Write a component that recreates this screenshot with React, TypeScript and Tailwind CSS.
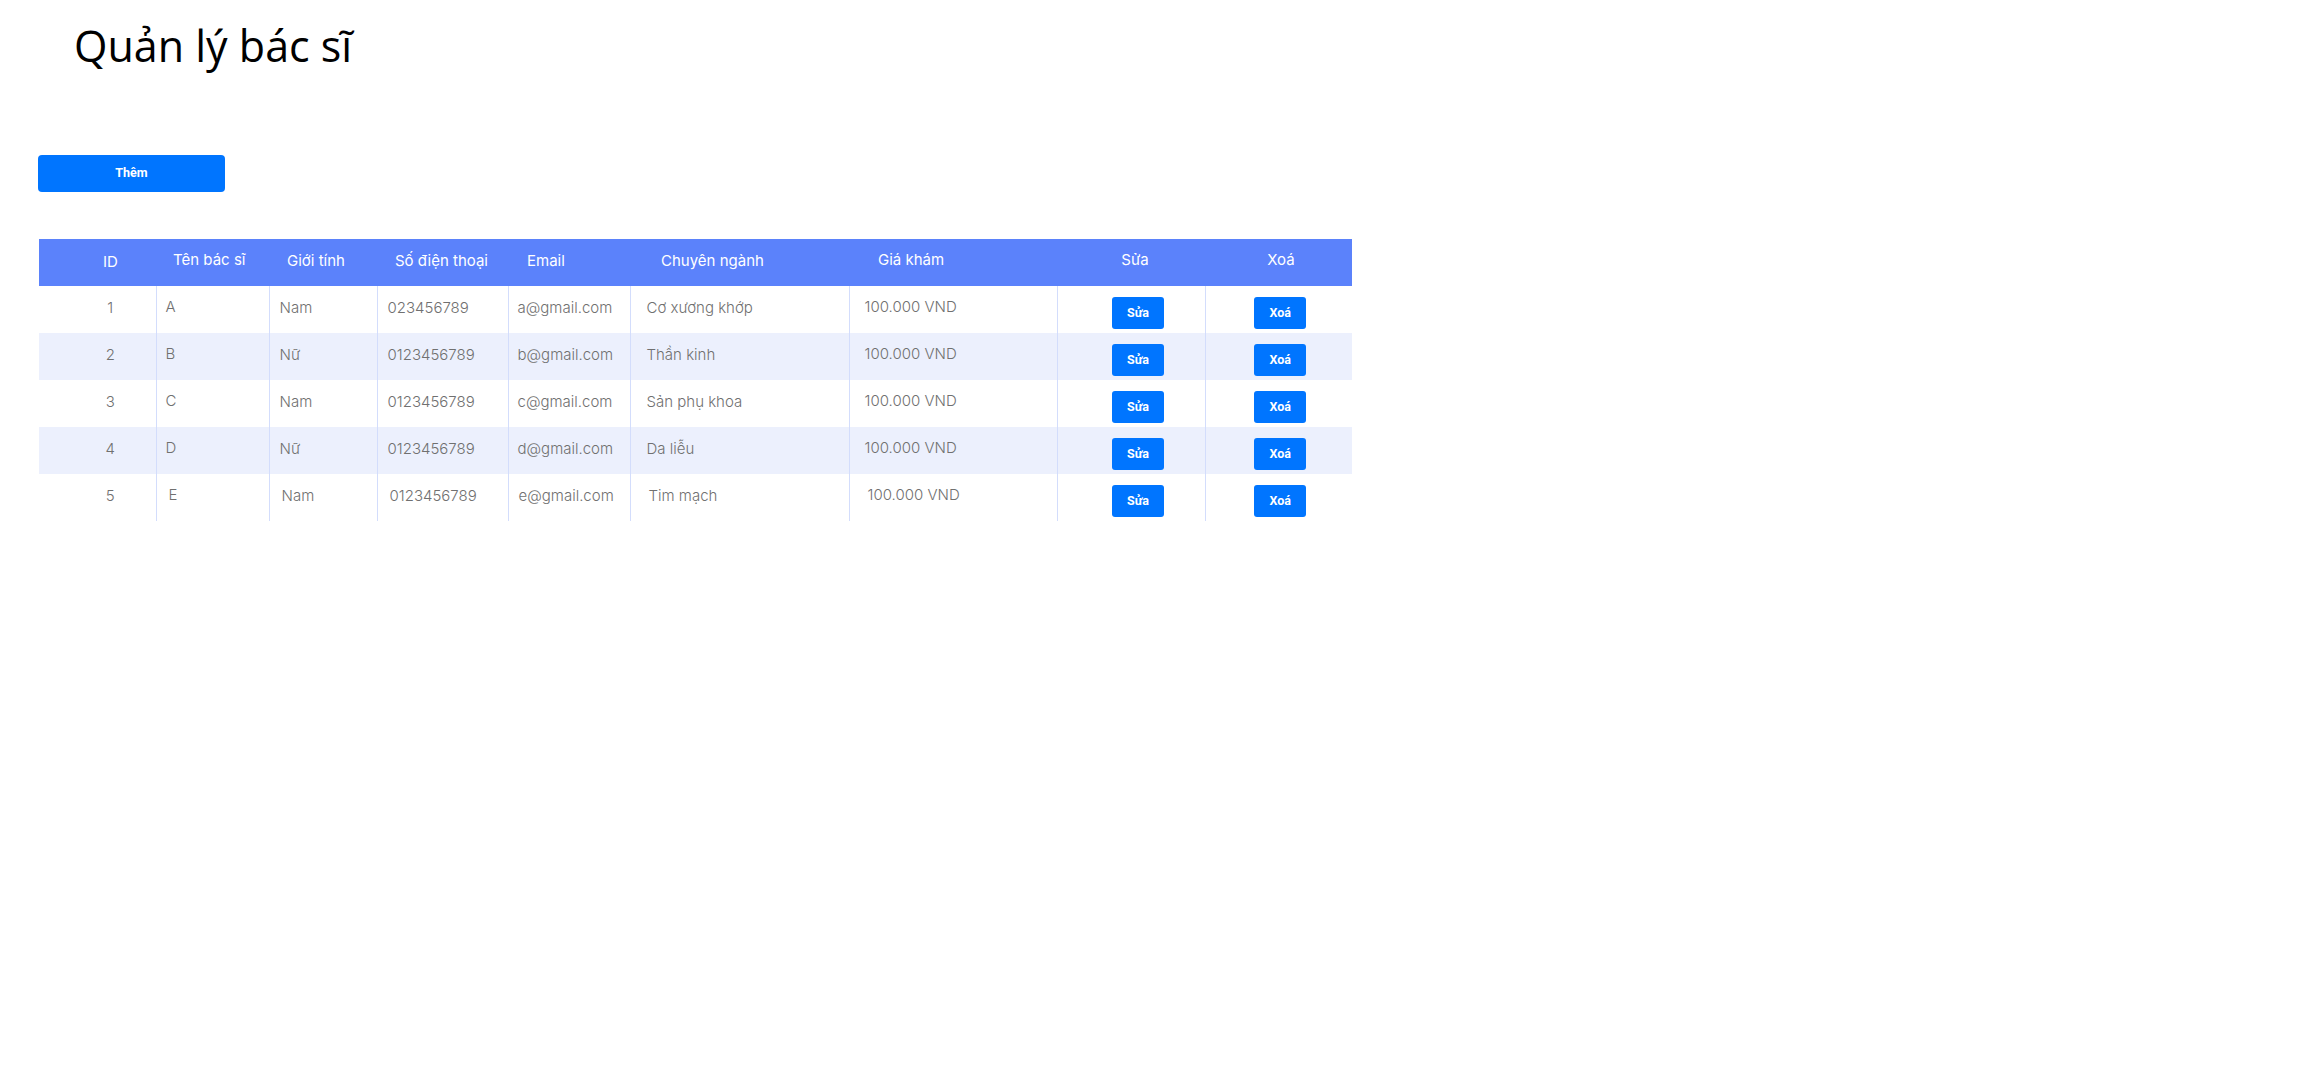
interface Doctor {
  id: number
  name: string
  gender: string
  phone: string
  email: string
  major: string
  price: string
}

const doctors: Doctor[] = [
  { id: 1, name: 'A', gender: 'Nam', phone: '023456789', email: 'a@gmail.com', major: 'Cơ xương khớp', price: '100.000 VND' },
  { id: 2, name: 'B', gender: 'Nữ', phone: '0123456789', email: 'b@gmail.com', major: 'Thần kinh', price: '100.000 VND' },
  { id: 3, name: 'C', gender: 'Nam', phone: '0123456789', email: 'c@gmail.com', major: 'Sản phụ khoa', price: '100.000 VND' },
  { id: 4, name: 'D', gender: 'Nữ', phone: '0123456789', email: 'd@gmail.com', major: 'Da liễu', price: '100.000 VND' },
  { id: 5, name: 'E', gender: 'Nam', phone: '0123456789', email: 'e@gmail.com', major: 'Tim mạch', price: '100.000 VND' },
]

function ActionButton({ label }: { label: string }) {
  return (
    <button
      className="flex items-center justify-center w-[52px] h-[32px] rounded-[3px] bg-[#0075ff] text-white text-[12.5px] font-bold"
      style={{ fontFamily: 'Roboto, "Liberation Sans", sans-serif' }}
    >
      {label}
    </button>
  )
}

export default function App() {
  return (
    <div className="min-h-screen bg-white">
      {/* Tiêu đề */}
      <h1
        className="ml-[74px] pt-[24px] text-[43px] leading-none font-normal text-black"
        style={{ fontFamily: '"Open Sans", "Noto Sans", sans-serif' }}
      >
        Quản lý bác sĩ
      </h1>

      <div className="pl-[38px] pt-[88px]">
        <button
          className="w-[187px] h-[37px] rounded-[4px] bg-[#0075ff] text-white text-[12.5px] font-bold"
          style={{ fontFamily: 'Roboto, "Liberation Sans", sans-serif' }}
        >
          Thêm
        </button>
      </div>

      {/* Bảng bác sĩ */}
      <div className="pl-[39px] pt-[47px]" style={{ fontFamily: 'Inter, "Noto Sans", sans-serif' }}>
        <table className="table-fixed border-collapse w-[1313px]">
          <colgroup>
            <col className="w-[117px]" />
            <col className="w-[113px]" />
            <col className="w-[108px]" />
            <col className="w-[131px]" />
            <col className="w-[122px]" />
            <col className="w-[219px]" />
            <col className="w-[208px]" />
            <col className="w-[148px]" />
            <col className="w-[147px]" />
          </colgroup>
          <thead>
            <tr className="h-[47px] bg-[#5b82fb] text-white text-[15px] font-normal">
              <th className="text-center pl-[26px] font-normal">ID</th>
              <th className="text-left pl-[17px] pb-[5px] font-normal">Tên bác sĩ</th>
              <th className="text-left pl-[18px] pb-[2px] font-normal">Giới tính</th>
              <th className="text-left pl-[18px] pb-[2px] font-normal">Số điện thoại</th>
              <th className="text-left pl-[19px] pb-[2px] font-normal">Email</th>
              <th className="text-left pl-[31px] pb-[2px] font-normal">Chuyên ngành</th>
              <th className="text-left pl-[29px] pb-[5px] font-normal">Giá khám</th>
              <th className="text-center pl-[8px] pb-[5px] font-normal">Sửa</th>
              <th className="text-center pl-[5px] pb-[5px] font-normal">Xoá</th>
            </tr>
          </thead>
          <tbody>
            {doctors.map((d, i) => {
              const shift = d.id === 5
              return (
                <tr
                  key={d.id}
                  className={`h-[47px] text-[15px] font-light text-[#707070] ${i % 2 === 1 ? 'bg-[#ecf0fd]' : 'bg-white'}`}
                >
                  <td className="text-center pl-[26px] pb-[3px]">{d.id}</td>
                  <td className={`border-l border-[#d3ddfc] pb-[5px] ${shift ? 'pl-[12px]' : 'pl-[9px]'}`}>{d.name}</td>
                  <td className={`border-l border-[#d3ddfc] pb-[3px] ${shift ? 'pl-[12px]' : 'pl-[10px]'}`}>{d.gender}</td>
                  <td className={`border-l border-[#d3ddfc] pb-[3px] ${shift ? 'pl-[12px]' : 'pl-[10px]'}`}>{d.phone}</td>
                  <td className={`border-l border-[#d3ddfc] pb-[3px] ${shift ? 'pl-[10px]' : 'pl-[9px]'}`}>{d.email}</td>
                  <td className={`border-l border-[#d3ddfc] pb-[3px] ${shift ? 'pl-[18px]' : 'pl-[16px]'}`}>{d.major}</td>
                  <td className={`border-l border-[#d3ddfc] pb-[5px] ${shift ? 'pl-[18px]' : 'pl-[15px]'}`}>{d.price}</td>
                  <td className="border-l border-[#d3ddfc] p-0">
                    <div className="flex justify-center pl-[14px] pt-[7px]">
                      <ActionButton label="Sửa" />
                    </div>
                  </td>
                  <td className="border-l border-[#d3ddfc] p-0">
                    <div className="flex justify-center pl-[3px] pt-[7px]">
                      <ActionButton label="Xoá" />
                    </div>
                  </td>
                </tr>
              )
            })}
          </tbody>
        </table>
      </div>
    </div>
  )
}
